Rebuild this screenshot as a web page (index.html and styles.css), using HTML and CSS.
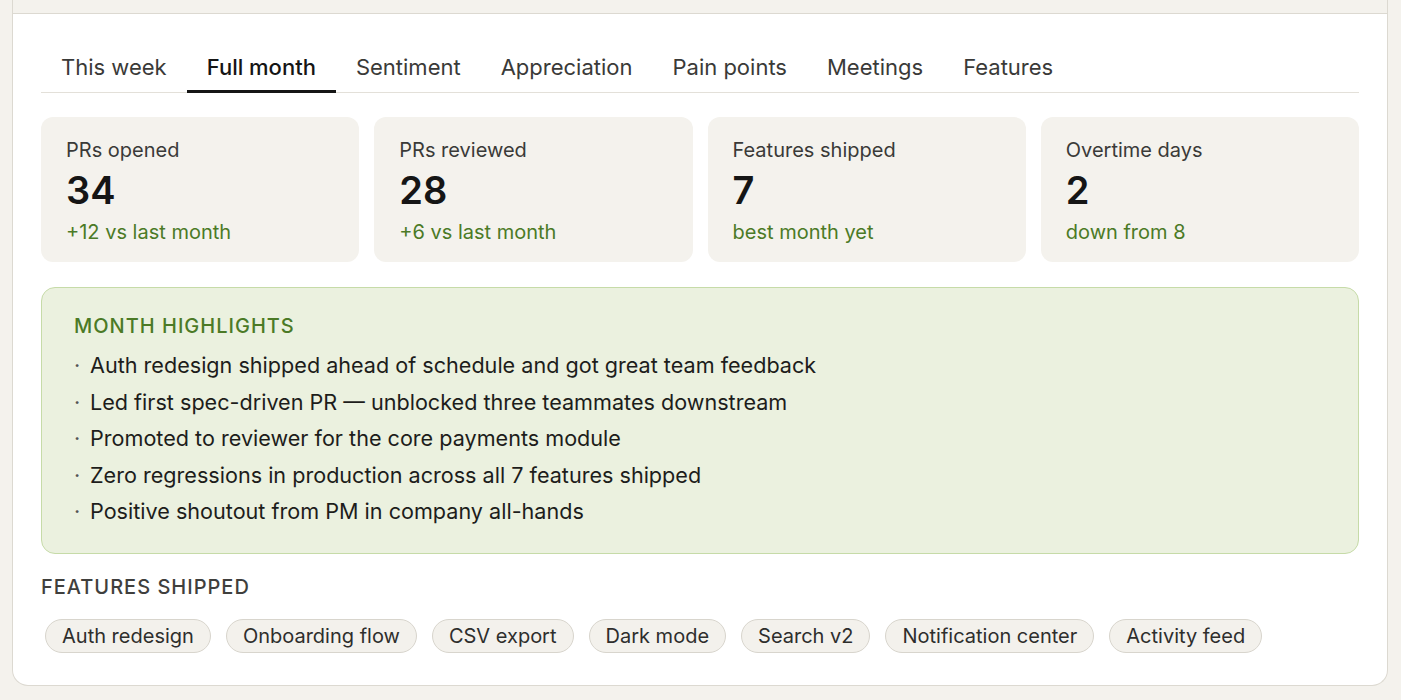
FILE: index.html
```html
<!DOCTYPE html>
<html lang="en">
<head>
    <meta charset="UTF-8">
    <meta name="viewport" content="width=device-width, initial-scale=1.0">
    <title>Monthly Review</title>
    <link rel="stylesheet" href="styles.css">
</head>
<body>
    <div class="page">
        <div class="panel">
            <div class="panel-top"></div>

            <div class="panel-body">
                <div class="tabs">
                    <div class="tab">This week</div>
                    <div class="tab active">Full month</div>
                    <div class="tab">Sentiment</div>
                    <div class="tab">Appreciation</div>
                    <div class="tab">Pain points</div>
                    <div class="tab">Meetings</div>
                    <div class="tab">Features</div>
                </div>

                <div class="stats">
                    <div class="stat">
                        <div class="stat-label">PRs opened</div>
                        <div class="stat-value">34</div>
                        <div class="stat-note">+12 vs last month</div>
                    </div>
                    <div class="stat">
                        <div class="stat-label">PRs reviewed</div>
                        <div class="stat-value">28</div>
                        <div class="stat-note">+6 vs last month</div>
                    </div>
                    <div class="stat">
                        <div class="stat-label">Features shipped</div>
                        <div class="stat-value">7</div>
                        <div class="stat-note">best month yet</div>
                    </div>
                    <div class="stat">
                        <div class="stat-label">Overtime days</div>
                        <div class="stat-value">2</div>
                        <div class="stat-note">down from 8</div>
                    </div>
                </div>

                <div class="highlights">
                    <h3>Month highlights</h3>
                    <ul>
                        <li>Auth redesign shipped ahead of schedule and got great team feedback</li>
                        <li>Led first spec-driven PR — unblocked three teammates downstream</li>
                        <li>Promoted to reviewer for the core payments module</li>
                        <li>Zero regressions in production across all 7 features shipped</li>
                        <li>Positive shoutout from PM in company all-hands</li>
                    </ul>
                </div>

                <h4 class="section-title">Features shipped</h4>
                <div class="chips">
                    <span class="chip">Auth redesign</span>
                    <span class="chip">Onboarding flow</span>
                    <span class="chip">CSV export</span>
                    <span class="chip">Dark mode</span>
                    <span class="chip">Search v2</span>
                    <span class="chip">Notification center</span>
                    <span class="chip">Activity feed</span>
                </div>
            </div>
        </div>
    </div>
</body>
</html>
```

FILE: styles.css
```css
* {
    margin: 0;
    padding: 0;
    box-sizing: border-box;
}

body {
    background: #f4f2ed;
    color: #1d1d1b;
    font-family: Inter, 'Liberation Sans', sans-serif;
}

.page {
    padding: 0 13px 15px 12px;
}

.panel {
    background: #fff;
    border: 1px solid #dcd9d1;
    border-top: none;
    border-radius: 0 0 16px 16px;
}

.panel-top {
    height: 14px;
    background: #f4f2ed;
    border-bottom: 1px solid #dcd9d1;
}

.panel-body {
    padding: 27px 28px 32px;
}

/* tabs */
.tabs {
    display: flex;
    border-bottom: 1px solid #e3e0d9;
}

.tab {
    padding: 13px 20px 10px;
    font-size: 22px;
    line-height: 26px;
    color: #3a3a38;
    border-bottom: 3px solid transparent;
    margin-bottom: -1px;
}

.tab.active {
    color: #151515;
    font-weight: 500;
    border-bottom-color: #151515;
}

/* stat cards */
.stats {
    display: grid;
    grid-template-columns: repeat(4, 1fr);
    gap: 15px;
    margin-top: 24px;
}

.stat {
    background: #f4f2ed;
    border-radius: 12px;
    padding: 19px 25px 16px;
}

.stat-label {
    font-size: 20px;
    line-height: 28px;
    color: #3a3a38;
}

.stat-value {
    font-size: 38px;
    line-height: 44px;
    font-weight: 600;
    color: #151515;
    margin-top: 4px;
}

.stat-note {
    font-size: 20px;
    line-height: 28px;
    color: #4b7a26;
    margin-top: 6px;
}

/* highlights */
.highlights {
    margin-top: 25px;
    background: #ebf1df;
    border: 1px solid #c6dba8;
    border-radius: 14px;
    padding: 26px 32px 23px;
}

.highlights h3 {
    font-size: 20px;
    line-height: 24px;
    font-weight: 500;
    letter-spacing: 1px;
    text-transform: uppercase;
    color: #4b7a26;
    margin-bottom: 9px;
}

.highlights ul {
    list-style: none;
}

.highlights li {
    font-size: 21.6px;
    line-height: 36.5px;
    color: #1d1d1b;
    padding-left: 16px;
    position: relative;
}

.highlights li::before {
    content: "·";
    position: absolute;
    left: 0;
    color: #555;
}

/* features shipped */
.section-title {
    margin-top: 21px;
    font-size: 20px;
    line-height: 24px;
    font-weight: 500;
    letter-spacing: 1px;
    text-transform: uppercase;
    color: #3f3f3d;
}

.chips {
    display: flex;
    flex-wrap: wrap;
    gap: 15px;
    margin-top: 20px;
    padding-left: 4px;
}

.chip {
    display: inline-block;
    height: 34px;
    line-height: 32px;
    padding: 0 16px;
    font-size: 20px;
    color: #2e2e2c;
    background: #f3f1ec;
    border: 1px solid #d8d5cd;
    border-radius: 999px;
}
```
